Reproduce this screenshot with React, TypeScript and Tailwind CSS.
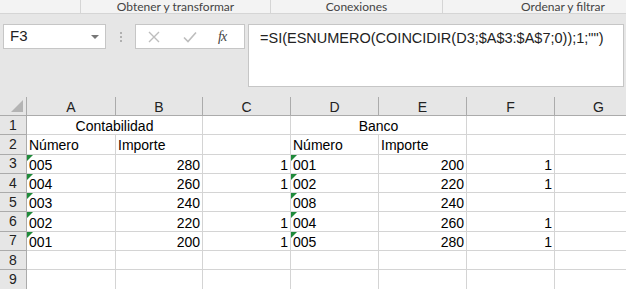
import React from "react"

const COLS = ["A", "B", "C", "D", "E", "F", "G"]
const COL_W = ["w-[89px]", "w-[87px]", "w-[88px]", "w-[88px]", "w-[88px]", "w-[88px]", "w-[88px]"]

type Cell = { text?: string; align?: "left" | "right" | "center"; flag?: boolean; span?: number }

const rows: Cell[][] = [
  [{ text: "Contabilidad", align: "center", span: 2 }, {}, { text: "Banco", align: "center", span: 2 }, {}, {}],
  [{ text: "Número" }, { text: "Importe" }, {}, { text: "Número" }, { text: "Importe" }, {}, {}],
  [{ text: "005", flag: true }, { text: "280", align: "right" }, { text: "1", align: "right" }, { text: "001", flag: true }, { text: "200", align: "right" }, { text: "1", align: "right" }, {}],
  [{ text: "004", flag: true }, { text: "260", align: "right" }, { text: "1", align: "right" }, { text: "002", flag: true }, { text: "220", align: "right" }, { text: "1", align: "right" }, {}],
  [{ text: "003", flag: true }, { text: "240", align: "right" }, {}, { text: "008", flag: true }, { text: "240", align: "right" }, {}, {}],
  [{ text: "002", flag: true }, { text: "220", align: "right" }, { text: "1", align: "right" }, { text: "004", flag: true }, { text: "260", align: "right" }, { text: "1", align: "right" }, {}],
  [{ text: "001", flag: true }, { text: "200", align: "right" }, { text: "1", align: "right" }, { text: "005", flag: true }, { text: "280", align: "right" }, { text: "1", align: "right" }, {}],
  [{}, {}, {}, {}, {}, {}, {}],
  [{}, {}, {}, {}, {}, {}, {}],
]

const spanW: Record<string, string> = {
  "0-2": "w-[176px]",
  "3-2": "w-[176px]",
}

const GridRow = ({ num, cells }: { num: number; cells: Cell[] }) => {
  let col = 0
  return (
    <div className="flex h-[19.3px]">
      <div className="w-[27px] shrink-0 flex items-center justify-center bg-[#e6e6e6] border-r border-b border-[#ababab] text-[14px] text-[#222]">
        {num}
      </div>
      {cells.map((c, i) => {
        const start = col
        const span = c.span ?? 1
        col += span
        const w = span > 1 ? spanW[`${start}-${span}`] : COL_W[start]
        return (
          <div
            key={i}
            className={`${w} shrink-0 relative flex items-center border-r border-b border-[#d4d4d4] px-[2px] text-[14px] text-black whitespace-nowrap overflow-visible ${
              c.align === "right" ? "justify-end" : c.align === "center" ? "justify-center" : "justify-start"
            }`}
          >
            {c.flag && (
              <span className="absolute left-0 top-0 w-0 h-0 border-t-[6px] border-r-[6px] border-t-[#1f8a3a] border-r-transparent" />
            )}
            <span className="leading-none pt-[2px]">{c.text}</span>
          </div>
        )
      })}
    </div>
  )
}

const App = () => {
  return (
    <div className="relative w-[626px] h-[289px] overflow-hidden bg-[#e6e6e6] font-['Liberation_Sans',Arial,sans-serif]">
      {/* ribbon group labels */}
      <div className="flex h-[14px] bg-[#f3f3f3] border-b border-[#d5d5d5] text-[12px] leading-[13px] text-[#444] font-['Lato','Noto_Sans',sans-serif]">
        <div className="w-[81px] shrink-0 border-r border-[#d5d5d5]" />
        <div className="w-[190px] shrink-0 border-r border-[#d5d5d5] text-center">Obtener y transformar</div>
        <div className="w-[172px] shrink-0 border-r border-[#d5d5d5] text-center">Conexiones</div>
        <div className="w-[240px] shrink-0 text-center">Ordenar y filtrar</div>
      </div>

      {/* formula bar */}
      <div className="flex items-start h-[83px] pt-[10px]">
        <div className="ml-[3px] w-[103px] h-[25px] bg-white border border-[#c6c6c6] flex items-center justify-between pl-[6px] pr-[6px]">
          <span className="text-[15px] text-[#222]">F3</span>
          <span className="w-0 h-0 border-l-[4px] border-r-[4px] border-t-[4px] border-l-transparent border-r-transparent border-t-[#777]" />
        </div>
        <div className="w-[29px] h-[25px] flex flex-col items-center justify-center gap-[2px]">
          <span className="w-[2px] h-[2px] bg-[#b0b0b0]" />
          <span className="w-[2px] h-[2px] bg-[#b0b0b0]" />
          <span className="w-[2px] h-[2px] bg-[#b0b0b0]" />
        </div>
        <div className="w-[110px] h-[25px] bg-white border border-[#c6c6c6] flex items-center">
          <svg width="14" height="14" viewBox="0 0 14 14" className="ml-[11px]">
            <path d="M2 2 L12 12 M12 2 L2 12" stroke="#bdbdbd" strokeWidth="1.4" fill="none" />
          </svg>
          <svg width="16" height="14" viewBox="0 0 16 14" className="ml-[21px]">
            <path d="M2 7.5 L6 11.5 L14 2.5" stroke="#bdbdbd" strokeWidth="1.6" fill="none" />
          </svg>
          <span className="ml-[20px] text-[14px] italic text-[#444] font-['Liberation_Serif',serif] tracking-[-1px]">fx</span>
        </div>
        <div className="ml-[3px] w-[376px] h-[63px] bg-white border border-[#c6c6c6] pl-[11px] pt-[3px] text-[14.5px] text-[#222] whitespace-nowrap">
          =SI(ESNUMERO(COINCIDIR(D3;$A$3:$A$7;0));1;"")
        </div>
      </div>

      {/* sheet */}
      <div className="bg-white">
        <div className="flex h-[19px] bg-[#e6e6e6]">
          <div className="w-[27px] shrink-0 relative border-r border-b border-[#ababab]">
            <span className="absolute right-[3px] bottom-[3px] w-0 h-0 border-l-[12px] border-b-[12px] border-l-transparent border-b-[#b4b4b4]" />
          </div>
          {COLS.map((c, i) => (
            <div
              key={c}
              className={`${COL_W[i]} shrink-0 flex items-center justify-center border-r border-b border-[#ababab] text-[14px] text-[#222]`}
            >
              <span className="leading-none pt-[1px]">{c}</span>
            </div>
          ))}
        </div>
        {rows.map((r, i) => (
          <GridRow key={i} num={i + 1} cells={r} />
        ))}
      </div>
    </div>
  )
}

export default App
